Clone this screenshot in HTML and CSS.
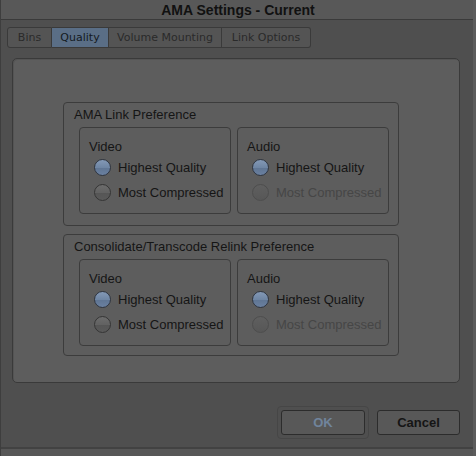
FILE: index.html
```html
<!DOCTYPE html>
<html>
<head>
<meta charset="utf-8">
<link rel="stylesheet" href="styles.css">
</head>
<body>
<div class="window">
  <div class="titlebar">AMA Settings - Current</div>
  <div class="tabs">
    <div class="tab t-bins">Bins</div>
    <div class="tab t-quality active">Quality</div>
    <div class="tab t-volume">Volume Mounting</div>
    <div class="tab t-link">Link Options</div>
  </div>
  <div class="panel">
    <div class="group g1">
      <div class="group-title">AMA Link Preference</div>
      <div class="subs">
        <div class="sub">
          <div class="sub-title">Video</div>
          <div class="opt"><span class="radio on"></span>Highest Quality</div>
          <div class="opt"><span class="radio"></span>Most Compressed</div>
        </div>
        <div class="sub">
          <div class="sub-title">Audio</div>
          <div class="opt"><span class="radio on"></span>Highest Quality</div>
          <div class="opt disabled"><span class="radio"></span>Most Compressed</div>
        </div>
      </div>
    </div>
    <div class="group g2">
      <div class="group-title">Consolidate/Transcode Relink Preference</div>
      <div class="subs">
        <div class="sub">
          <div class="sub-title">Video</div>
          <div class="opt"><span class="radio on"></span>Highest Quality</div>
          <div class="opt"><span class="radio"></span>Most Compressed</div>
        </div>
        <div class="sub">
          <div class="sub-title">Audio</div>
          <div class="opt"><span class="radio on"></span>Highest Quality</div>
          <div class="opt disabled"><span class="radio"></span>Most Compressed</div>
        </div>
      </div>
    </div>
  </div>
  <div class="footer">
    <div class="focus-ring"><div class="btn ok">OK</div></div>
    <div class="btn cancel">Cancel</div>
  </div>
  <div class="bottom-edge"></div>
</div>
</body>
</html>
```
FILE: styles.css
```css
html, body {
  margin: 0;
  padding: 0;
  background: #4f4f4f;
}
body {
  width: 476px;
  height: 456px;
  overflow: hidden;
  font-family: "Liberation Sans", Arial, sans-serif;
  color: #151515;
}
.window {
  width: 476px;
  height: 456px;
  box-sizing: border-box;
  border-left: 1px solid #3e3e3e;
  border-right: 3px solid #5c5c5c;
  background: #4f4f4f;
  display: flex;
  flex-direction: column;
}
.titlebar {
  height: 20px;
  box-sizing: border-box;
  background: #585858;
  border-bottom: 1px solid #3a3a3a;
  font-weight: bold;
  font-size: 14px;
  line-height: 20px;
  text-align: center;
  color: #111;
  padding-left: 2px;
}
.tabs {
  display: flex;
  margin-top: 7px;
  padding-left: 6px;
  height: 21px;
}
.tab {
  box-sizing: border-box;
  height: 21px;
  border: 1px solid #3a3a3a;
  border-left: none;
  background: #545454;
  font-family: "DejaVu Sans", sans-serif;
  font-size: 11px;
  line-height: 19px;
  text-align: center;
  color: #1e1e1e;
}
.tab:first-child {
  border-left: 1px solid #3a3a3a;
  border-radius: 3px 0 0 3px;
}
.tab:last-child {
  border-radius: 0 3px 3px 0;
}
.t-bins { width: 45px; color: #2a2a2a; }
.t-quality { width: 57px; }
.t-volume { width: 113px; color: #2a2a2a; }
.t-link { width: 89px; color: #2a2a2a; }
.tab.active {
  background: #5a6e86;
  color: #141a22;
}
.panel {
  margin: 10px 13px 0 11px;
  height: 325px;
  box-sizing: border-box;
  background: #5d5d5d;
  border: 1px solid #3a3a3a;
  border-radius: 5px;
  box-shadow: inset 1px 1px 0 #545454;
  padding: 43px 0 0 50px;
}
.group {
  width: 336px;
  box-sizing: border-box;
  border: 1px solid #3c3c3c;
  border-radius: 4px;
  padding: 3px 9px 0 15px;
}
.g1 { height: 124px; }
.g2 { height: 122px; margin-top: 8px; }
.group-title {
  font-size: 13px;
  line-height: 17px;
  margin-left: -5px;
}
.subs {
  display: flex;
  gap: 6px;
  margin-top: 4px;
}
.sub {
  width: 152px;
  height: 87px;
  box-sizing: border-box;
  border: 1px solid #3c3c3c;
  border-radius: 4px;
  padding: 11px 0 0 14px;
}
.sub-title {
  font-size: 13px;
  line-height: 16px;
  margin-left: -5px;
  margin-bottom: 0;
}
.opt {
  display: flex;
  align-items: center;
  height: 25px;
  font-size: 13px;
  white-space: nowrap;
}
.opt.disabled { color: #464646; }
.radio {
  width: 17px;
  height: 17px;
  box-sizing: border-box;
  border-radius: 50%;
  border: 1px solid #353535;
  background: linear-gradient(#6c6c6c 0%, #626262 50%, #555 52%, #5a5a5a 100%);
  margin-right: 7px;
  flex: none;
}
.radio.on {
  border-color: #2f3540;
  background: linear-gradient(#8399b6 0%, #6f86a4 50%, #5f7593 52%, #6a80a0 100%);
}
.opt.disabled .radio {
  border-color: #4d4d4d;
  background: linear-gradient(#5f5f5f, #575757);
}
.footer {
  display: flex;
  align-items: center;
  margin-top: 23px;
  padding-left: 276px;
  gap: 8px;
}
.focus-ring {
  border: 1px solid #464646;
  border-radius: 4px;
  padding: 3px;
}
.btn {
  box-sizing: border-box;
  height: 25px;
  border: 1px solid #2c2c2c;
  border-radius: 3px;
  background: #585858;
  font-weight: bold;
  font-size: 13px;
  line-height: 23px;
  text-align: center;
}
.ok {
  width: 84px;
  color: #70849c;
}
.cancel {
  width: 83px;
  color: #151515;
}
.bottom-edge {
  margin-top: auto;
  height: 7px;
  border-top: 2px solid #424242;
  background: #575757;
}
```
